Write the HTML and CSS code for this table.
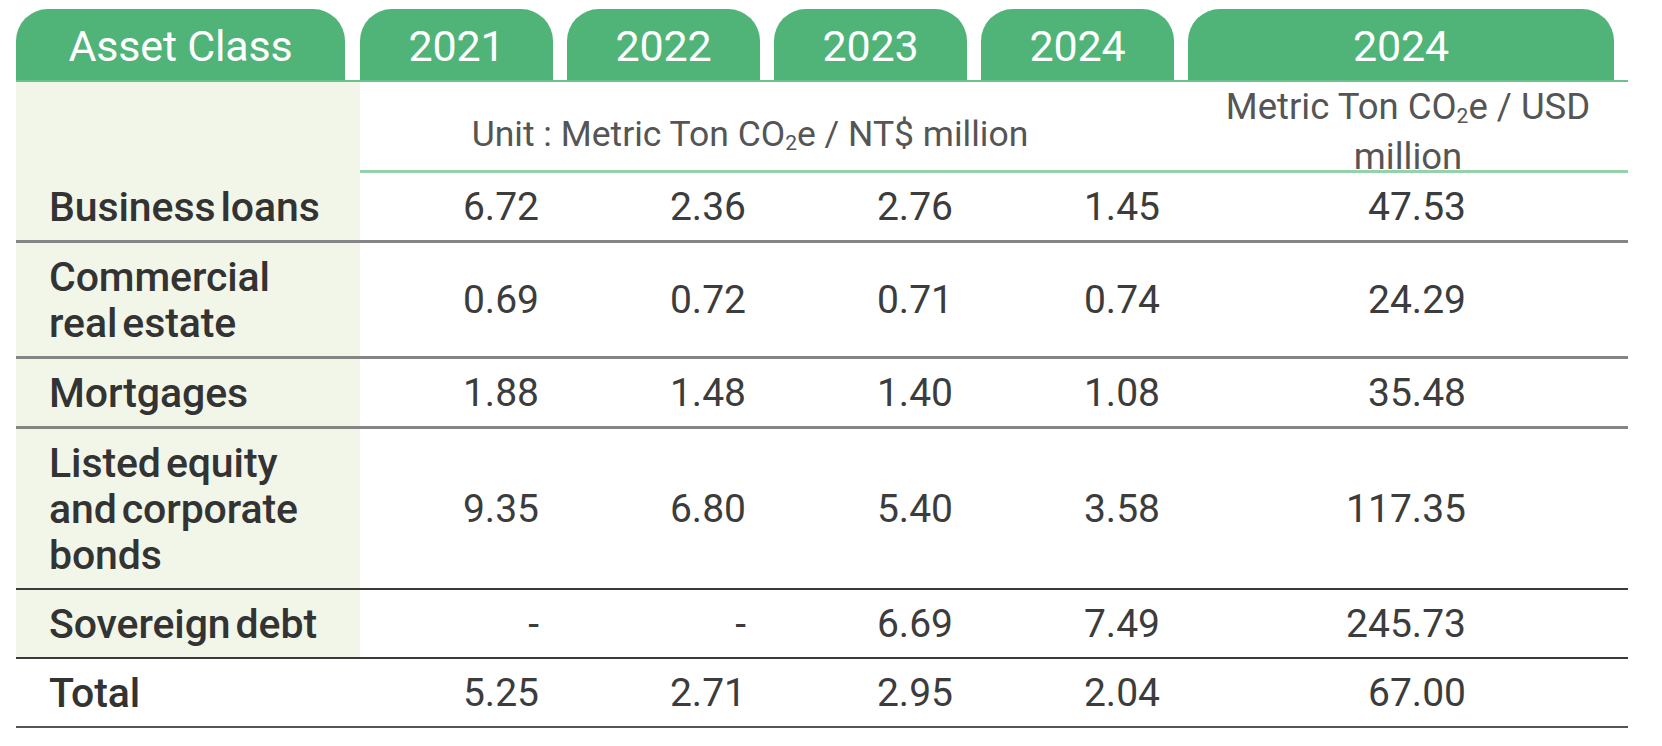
FILE: index.html
```html
<!DOCTYPE html>
<html lang="en">
<head>
<meta charset="utf-8">
<title>Financed emissions intensity</title>
<link rel="stylesheet" href="styles.css">
</head>
<body>
<div class="page">
  <div class="tbl">
    <div class="row head-row">
      <div class="tab">Asset Class</div>
      <div class="tab">2021</div>
      <div class="tab">2022</div>
      <div class="tab">2023</div>
      <div class="tab">2024</div>
      <div class="tab">2024</div>
    </div>
    <div class="row unit-row">
      <div class="label-bg"></div>
      <div class="unit unit-span"><span class="unit-text">Unit : Metric Ton CO<sub>2</sub>e / NT$ million</span></div>
      <div class="unit unit-usd"><span class="unit-text">Metric Ton CO<sub>2</sub>e / USD<br>million</span></div>
    </div>
    <div class="row body-row light-line">
      <div class="label">Business loans</div>
      <div class="val">6.72</div>
      <div class="val">2.36</div>
      <div class="val">2.76</div>
      <div class="val">1.45</div>
      <div class="val val-last">47.53</div>
    </div>
    <div class="row body-row light-line">
      <div class="label">Commercial<br>real estate</div>
      <div class="val">0.69</div>
      <div class="val">0.72</div>
      <div class="val">0.71</div>
      <div class="val">0.74</div>
      <div class="val val-last">24.29</div>
    </div>
    <div class="row body-row light-line">
      <div class="label">Mortgages</div>
      <div class="val">1.88</div>
      <div class="val">1.48</div>
      <div class="val">1.40</div>
      <div class="val">1.08</div>
      <div class="val val-last">35.48</div>
    </div>
    <div class="row body-row dark-line">
      <div class="label">Listed equity<br>and corporate<br>bonds</div>
      <div class="val">9.35</div>
      <div class="val">6.80</div>
      <div class="val">5.40</div>
      <div class="val">3.58</div>
      <div class="val val-last">117.35</div>
    </div>
    <div class="row body-row dark-line">
      <div class="label">Sovereign debt</div>
      <div class="val">-</div>
      <div class="val">-</div>
      <div class="val">6.69</div>
      <div class="val">7.49</div>
      <div class="val val-last">245.73</div>
    </div>
    <div class="row body-row total-row">
      <div class="label label-plain">Total</div>
      <div class="val">5.25</div>
      <div class="val">2.71</div>
      <div class="val">2.95</div>
      <div class="val">2.04</div>
      <div class="val val-last">67.00</div>
    </div>
  </div>
</div>
</body>
</html>
```

FILE: styles.css
```css
html, body {
  margin: 0;
  padding: 0;
  background: #ffffff;
}

.page {
  padding: 9px 0 0 16px;
  font-family: Roboto, "Liberation Sans", Arial, sans-serif;
}

.tbl {
  width: 1612px;
}

.row {
  display: grid;
  grid-template-columns: 344px 207px 207px 207px 207px 440px;
}

/* Header tabs */
.head-row {
  height: 71px;
  border-bottom: 2px solid #6cc28d;
}

.tab {
  margin-right: 14px;
  padding-top: 3px;
  background: #50b478;
  border-radius: 32px 32px 0 0;
  color: #ffffff;
  font-size: 43px;
  font-weight: 400;
  display: flex;
  align-items: center;
  justify-content: center;
  letter-spacing: -0.2px;
}

.tab:first-child {
  margin-right: 15px;
}

/* Unit row */
.unit-row {
  height: 88px;
  border-bottom: 3px solid #94d2a9;
}

.label-bg {
  background: #f2f6e9;
}

.unit {
  color: #555555;
  font-size: 35.5px;
  display: flex;
  align-items: center;
  justify-content: center;
  text-align: center;
}

.unit-text {
  display: block;
}

.unit-span {
  grid-column: 2 / span 4;
  padding-right: 48px;
  padding-bottom: 9px;
  line-height: 40px;
}

.unit-usd {
  font-size: 36.5px;
  line-height: 50px;
  padding-bottom: 12px;
}

.unit sub {
  font-size: 21px;
  vertical-align: -4px;
  line-height: 0;
}

/* Body rows */
.light-line {
  border-bottom: 3px solid #858585;
}

.dark-line {
  border-bottom: 2px solid #3a3a3a;
}

.total-row {
  border-bottom: 2px solid #555555;
}

.label {
  background: #f2f6e9;
  padding: 10.5px 0 10.5px 33px;
  font-size: 41px;
  line-height: 46px;
  font-weight: 500;
  color: #333333;
  word-spacing: -5px;
  letter-spacing: -0.1px;
}

.label-plain {
  background: transparent;
}

.val {
  display: flex;
  align-items: center;
  justify-content: flex-end;
  padding-right: 28px;
  font-size: 39px;
  color: #3c3c3c;
}

.val-last {
  padding-right: 162px;
}
```
